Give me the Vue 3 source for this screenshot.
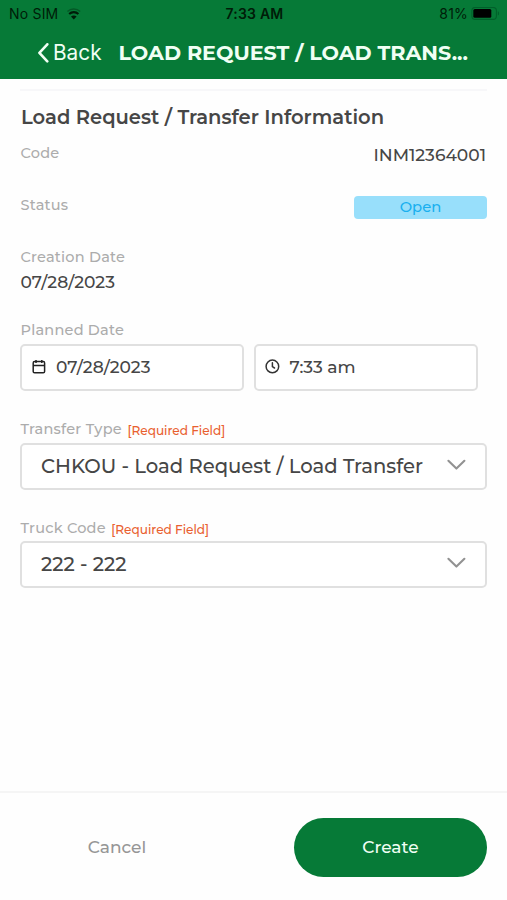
<script setup>
const status = { carrier: 'No SIM', time: '7:33 AM', battery: '81%' }
const selects = [
  { label: 'Transfer Type', value: 'CHKOU - Load Request / Load Transfer', kind: 'transfer' },
  { label: 'Truck Code', value: '222 - 222', kind: 'truck' },
]
</script>

<template>
  <div class="screen">
    <header class="header">
      <div class="status-bar">
        <div class="carrier">
          <span class="carrier-name">{{ status.carrier }}</span>
          <svg class="wifi" width="16" height="12" viewBox="0 0 16 12" fill="none" stroke="#001c08">
            <path d="M1.4 3.6C5 .2 10.6 .2 14.2 3.6" stroke-width="1.4" opacity=".35" />
            <path d="M3.2 6.1c2.6-2.6 6.6-2.6 9.2 0" stroke-width="2.1" />
            <path d="M5 8.6c1.6-1.5 4-1.5 5.6 0L7.8 11.6z" fill="#001c08" stroke="none" />
          </svg>
        </div>
        <span class="time">{{ status.time }}</span>
        <div class="power">
          <span class="percent">{{ status.battery }}</span>
          <svg width="29" height="14" viewBox="0 0 29 14">
            <rect x=".9" y=".4" width="24.5" height="12" rx="3.4" fill="none" stroke="#00602a" stroke-width="1.1" />
            <rect x="2.3" y="2.1" width="18" height="8.6" rx="1.5" fill="#000" />
            <path d="M26.8 4.2c1.7.6 1.7 3.8 0 4.4z" fill="#00602a" />
          </svg>
        </div>
      </div>
      <nav class="nav">
        <button class="back">
          <svg width="12" height="20" viewBox="0 0 12 20" fill="none" stroke="#f0fff4" stroke-width="2.6" stroke-linecap="round" stroke-linejoin="round">
            <path d="M10.3 1.3 2.4 9.8l7.9 8.5" />
          </svg>
          <span class="back-text">Back</span>
        </button>
        <h1 class="nav-title">LOAD REQUEST / LOAD TRANS...</h1>
      </nav>
    </header>

    <main class="content">
      <hr class="divider" />
      <h2 class="section-title">Load Request / Transfer Information</h2>
      <div class="info-row">
        <span class="label">Code</span>
        <span class="value">INM12364001</span>
      </div>
      <div class="info-row status-row">
        <span class="label">Status</span>
        <span class="badge">Open</span>
      </div>
      <div class="created">
        <div class="label">Creation Date</div>
        <div class="value">07/28/2023</div>
      </div>
      <div class="planned">
        <div class="label planned-label">Planned Date</div>
        <div class="pickers">
          <div class="box picker">
            <svg width="16" height="16" viewBox="0 0 16 16" fill="none" stroke="#222" stroke-width="1.5" stroke-linejoin="round">
              <rect x="2.2" y="2.6" width="11.4" height="11.2" rx="1.4" />
              <path d="M2.2 6.6h11.4M5 .9v3M10.8 .9v3" />
            </svg>
            <span class="value">07/28/2023</span>
          </div>
          <div class="box picker">
            <svg width="16" height="16" viewBox="0 0 16 16" fill="none" stroke="#333" stroke-width="1.5" stroke-linecap="round" stroke-linejoin="round">
              <circle cx="7.4" cy="7.4" r="6.3" />
              <path d="M7.4 3.7v4l2.1 1.3" />
            </svg>
            <span class="value">7:33 am</span>
          </div>
        </div>
      </div>
      <div v-for="s in selects" :key="s.kind" class="field" :class="s.kind">
        <div class="field-head">
          <span class="label">{{ s.label }}</span>
          <span class="required">[Required Field]</span>
        </div>
        <div class="box select">
          <span class="select-value">{{ s.value }}</span>
          <svg class="chevron" width="20" height="12" viewBox="0 0 20 12" fill="none" stroke="#929292" stroke-width="2.1" stroke-linecap="round" stroke-linejoin="round">
            <path d="M2.4 1.8 10.4 9.6l8-7.8" />
          </svg>
        </div>
      </div>
    </main>

    <footer class="footer">
      <button class="cancel">Cancel</button>
      <button class="create">Create</button>
    </footer>
  </div>
</template>

<style>
body { margin: 0; background: #fefefe; }
</style>

<style scoped>
.screen {
  width: 507px;
  height: 900px;
  display: flex;
  flex-direction: column;
  background: #fefefe;
  color: #464646;
  font-family: Montserrat, Inter, sans-serif;
  overflow: hidden;
}
.screen * { box-sizing: border-box; }
span, h1, h2, .label, .value { white-space: nowrap; }
button { border: 0; padding: 0; background: none; font: inherit; }
.header { height: 79px; background: #067a37; flex: none; }
.status-bar {
  height: 27px;
  padding: 0 7px 0 9px;
  display: grid;
  grid-template-columns: 1fr auto 1fr;
  align-items: center;
  font: 400 14px/27px Inter, sans-serif;
  letter-spacing: 0.2px;
  color: #001c08;
}
.carrier, .power { display: flex; align-items: center; gap: 8px; }
.power { justify-content: flex-end; gap: 3px; }
.time { font-weight: 600; }
.nav { height: 52px; display: flex; align-items: center; padding-left: 37px; color: #f0fff4; }
.back { display: flex; align-items: center; gap: 4px; color: inherit; }
.back-text { font: 400 20.8px/30px Inter, sans-serif; }
.nav-title { margin: 0 0 0 17px; font-size: 20.7px; line-height: 30px; font-weight: 700; }
.content { flex: 1; padding: 10px 20px 0; }
.divider { height: 2px; margin: 0; border: 0; background: #f7f7f9; }
.section-title { margin: 12px 0 0 1px; font-size: 19.55px; line-height: 29px; height: 28px; font-weight: 600; }
.label { font-size: 14.5px; letter-spacing: 0.22px; line-height: 20px; font-weight: 500; color: #acacac; padding-left: 0.5px; }
.value { font-size: 17.1px; line-height: 24px; font-weight: 500; }
.info-row { height: 53px; padding-top: 12px; display: flex; justify-content: space-between; align-items: flex-start; }
.info-row .value { padding-right: 1px; }
.status-row { height: 52px; }
.status-row .label { margin-top: -1px; }
.badge {
  width: 133px;
  height: 23px;
  border-radius: 4px;
  background: #98dffb;
  color: #1ab0ef;
  font-size: 14.8px;
  font-weight: 500;
  line-height: 23px;
  text-align: center;
}
.created { height: 84px; padding-top: 11px; }
.created .value { margin-top: 3px; padding-left: 0.5px; }
.planned-label { height: 24px; line-height: 21px; }
.pickers { display: flex; gap: 10px; }
.box { height: 47px; border: 2px solid #e0e0e0; border-radius: 5px; display: flex; align-items: center; background: #fff; }
.picker { width: 224px; padding: 0 0 1px 9px; gap: 9px; }
.picker + .picker { gap: 8.5px; }
.field { padding-top: 28px; height: 99px; }
.field-head { height: 24px; display: flex; gap: 5.5px; }
.truck .field-head { height: 23px; }
.required { font-size: 12.1px; line-height: 23px; font-weight: 500; color: #e9602f; }
.select { width: 467px; justify-content: space-between; padding: 0 19px 2px 19px; }
.select-value { font-size: 19.6px; line-height: 26px; font-weight: 500; }
.chevron { margin-bottom: 2px; }
.footer { height: 109px; border-top: 2px solid #f5f5f5; display: flex; padding: 25px 20px 0; }
.cancel, .create { height: 59px; font-size: 17px; font-weight: 500; padding-bottom: 2px; }
.cancel { width: 194px; color: #969696; }
.create { width: 193px; margin-left: 80px; border-radius: 30px; background: #067a37; color: #f0fff4; }
</style>
